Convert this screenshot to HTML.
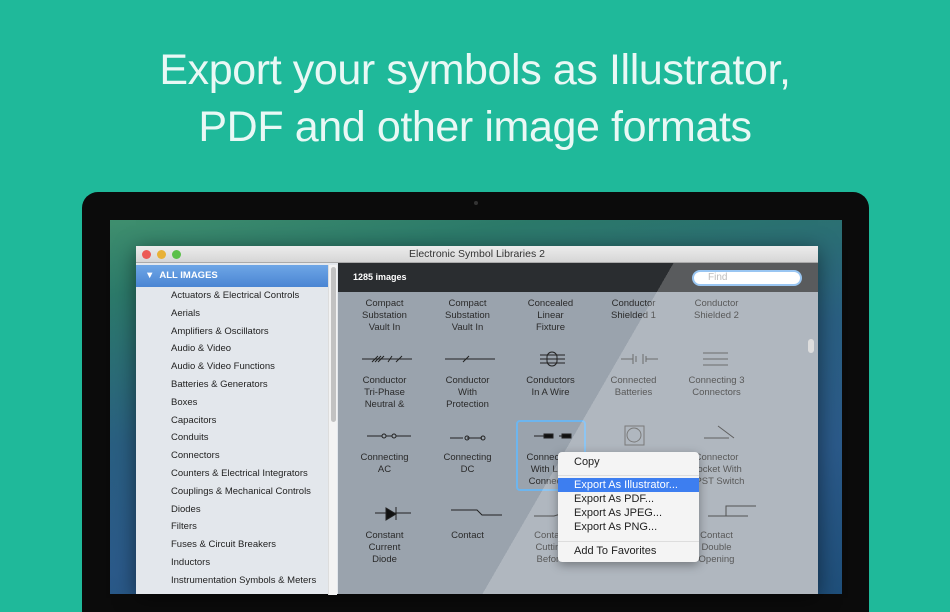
<!DOCTYPE html>
<html><head><meta charset="utf-8"><style>
*{margin:0;padding:0;box-sizing:border-box}
body{width:950px;height:594px;overflow:hidden;background:#1fb99a;font-family:"Liberation Sans",sans-serif;position:relative}
h1{position:absolute;top:42px;left:0;width:950px;text-align:center;color:#fff;font-weight:normal;font-size:43px;line-height:57px;letter-spacing:-0.4px;font-family:"Liberation Sans",sans-serif;opacity:.9}
.bezel{position:absolute;left:82px;top:192px;width:787px;height:420px;background:#0b0b0b;border-radius:16px 16px 0 0}
.cam{position:absolute;left:474px;top:201px;width:4px;height:4px;border-radius:50%;background:#333}
.screen{position:absolute;left:110px;top:220px;width:732px;height:374px;background:linear-gradient(170deg,#3f8f6e 0%,#2c7a6a 15%,#2a5f82 45%,#2b5a8a 70%,#1f4f7a 100%)}
.win{position:absolute;left:136px;top:246px;width:682px;height:348px;background:#e8e8e8;box-shadow:0 4px 20px rgba(0,0,0,.5)}
.title{height:17px;background:linear-gradient(#ececec,#d6d6d6);font-size:10.5px;text-align:center;line-height:17px;color:#333;border-bottom:1px solid #aaa;position:relative}
.dot{position:absolute;top:4px;width:9px;height:9px;border-radius:50%}
.side{position:absolute;left:0;top:17px;width:202px;height:331px;background:#e3e7ec}
.sel{height:22px;margin-top:2px;background:linear-gradient(#6ea6e6,#4a85d3);color:#fff;font-size:9.5px;font-weight:bold;line-height:22px;padding-left:9px;width:192px}
.side ul{list-style:none;padding-left:35px;font-size:9.5px;color:#222}
.side li{height:17.8px;line-height:17.8px}
.sb{position:absolute;left:192px;top:2px;width:9px;height:330px;background:#f3f3f3;border-left:1px solid #ddd}
.sb div{position:absolute;left:2px;top:2px;width:5px;height:155px;background:#c2c2c2;border-radius:3px}
.main{position:absolute;left:202px;top:17px;width:480px;height:331px;background:#9aa3ad;overflow:hidden}
.tb{height:29px;background:#2a2d30;color:#fff;font-size:9px;font-weight:bold;line-height:29px;padding-left:15px;position:relative}
.find{position:absolute;left:354px;top:7px;width:110px;height:16px;border-radius:8px;background:#fff;border:2px solid #7db6ee;color:#aaa;font-weight:normal;font-size:10px;line-height:12px;padding-left:14px}
.cell{position:absolute;width:83px;text-align:center;font-size:9.5px;line-height:12px;color:#2a2a2a}
.glare{position:absolute;left:0;top:0;width:480px;height:331px;background:linear-gradient(120deg,transparent 0,transparent 50%,rgba(255,255,255,.22) 50%,rgba(255,255,255,.22) 100%)}
.menu{position:absolute;left:558px;top:452px;width:141px;height:110px;background:#f4f4f4;border-radius:4px;box-shadow:0 3px 10px rgba(0,0,0,.35);font-size:11px;color:#222}
.menu div{height:14px;line-height:14px;padding-left:16px}
.menu .h{background:#3d7ef0;color:#fff}
svg{position:absolute}
</style></head><body>
<h1>Export your symbols as Illustrator,<br>PDF and other image formats</h1>
<div class="bezel"></div><div class="cam"></div>
<div class="screen"></div>
<div class="win">
 <div class="title">Electronic Symbol Libraries 2
  <span class="dot" style="left:6px;background:#ec5a55"></span><span class="dot" style="left:21px;background:#e8b136"></span><span class="dot" style="left:36px;background:#5cc04a"></span></div>
 <div class="side">
  <div class="sel">▼&nbsp; ALL IMAGES</div>
  <ul><li>Actuators &amp; Electrical Controls</li><li>Aerials</li><li>Amplifiers &amp; Oscillators</li><li>Audio &amp; Video</li><li>Audio &amp; Video Functions</li><li>Batteries &amp; Generators</li><li>Boxes</li><li>Capacitors</li><li>Conduits</li><li>Connectors</li><li>Counters &amp; Electrical Integrators</li><li>Couplings &amp; Mechanical Controls</li><li>Diodes</li><li>Filters</li><li>Fuses &amp; Circuit Breakers</li><li>Inductors</li><li>Instrumentation Symbols &amp; Meters</li></ul>
  <div class="sb"><div></div></div>
 </div>
 <div class="main">
  <div class="tb">1285 images<div class="find">Find</div></div>
  <div class="cell" style="left:5px;top:35px">Compact<br>Substation<br>Vault In</div>
  <div class="cell" style="left:88px;top:35px">Compact<br>Substation<br>Vault In</div>
  <div class="cell" style="left:171px;top:35px">Concealed<br>Linear<br>Fixture</div>
  <div class="cell" style="left:254px;top:35px">Conductor<br>Shielded 1</div>
  <div class="cell" style="left:337px;top:35px">Conductor<br>Shielded 2</div>
  <div class="cell" style="left:5px;top:112px">Conductor<br>Tri-Phase<br>Neutral &amp;</div>
  <div class="cell" style="left:88px;top:112px">Conductor<br>With<br>Protection</div>
  <div class="cell" style="left:171px;top:112px">Conductors<br>In A Wire</div>
  <div class="cell" style="left:254px;top:112px">Connected<br>Batteries</div>
  <div class="cell" style="left:337px;top:112px">Connecting 3<br>Connectors</div>
  <div class="cell" style="left:5px;top:189px">Connecting<br>AC</div>
  <div class="cell" style="left:88px;top:189px">Connecting<br>DC</div>
  <div class="cell" style="left:171px;top:189px">Connecting<br>With Line<br>Connector</div>
  <div class="cell" style="left:337px;top:189px">Connector<br>Socket With<br>DPST Switch</div>
  <div class="cell" style="left:5px;top:267px">Constant<br>Current<br>Diode</div>
  <div class="cell" style="left:88px;top:267px">Contact</div>
  <div class="cell" style="left:171px;top:267px">Contact<br>Cutting<br>Before</div>
  <div class="cell" style="left:337px;top:267px">Contact<br>Double<br>Opening</div>
  <div style="position:absolute;left:178px;top:157px;width:70px;height:71px;border:2px solid #6db5ee;border-radius:4px"></div>
  <svg width="480" height="331" style="left:0;top:0" stroke="#222" fill="none" stroke-width="1">
   <path d="M24 96h50M34 99l6-6M37 99l6-6M40 99l6-6M50 99l4-6M58 99l6-6"/>
   <path d="M107 96h50M125 99l6-6"/>
   <path d="M202 92h25M202 96h25M202 100h25"/><rect x="209" y="89" width="10" height="14" rx="5"/>
   <path d="M283 96h12M295 91v10M298 93v6M305 91v10M308 93v6M308 96h12" stroke="#444"/>
   <path d="M365 90h25M365 96h25M365 102h25" stroke="#444"/>
   <path d="M29 173h15M48 173h6M58 173h15"/><circle cx="46" cy="173" r="2"/><circle cx="56" cy="173" r="2"/>
   <path d="M112 175h13M131 175h12M129 175h15"/><circle cx="129" cy="175" r="2"/><circle cx="145" cy="175" r="2"/>
   <path d="M196 173h10M221 173h10" /><rect x="206" y="171" width="9" height="4" fill="#111"/><rect x="224" y="171" width="9" height="4" fill="#111"/>
   <rect x="287" y="163" width="19" height="19" stroke="#555"/><circle cx="296" cy="172" r="7" stroke="#555"/>
   <path d="M366 175h25M380 163l16 12" stroke="#333"/>
   <path d="M37 250h36"/><path d="M48 245v12l10-6z" fill="#111"/><path d="M58 244v13"/>
   <path d="M113 247h26l5 5h20"/>
   <path d="M196 253h20l20-6"/>
   <path d="M370 253h40M388 253v-10h30"/>
  </svg>
  <div class="glare"></div>
  <div style="position:absolute;left:470px;top:76px;width:6px;height:14px;background:#ddd;border-radius:3px"></div>
 </div>
</div>
<div class="menu">
 <div style="margin-top:3px">Copy</div>
 <div style="height:7px;border-bottom:1px solid #ddd;margin-bottom:2px"></div>
 <div class="h">Export As Illustrator...</div>
 <div>Export As PDF...</div><div>Export As JPEG...</div><div>Export As PNG...</div>
 <div style="height:8px;border-bottom:1px solid #ddd"></div>
 <div style="margin-top:2px">Add To Favorites</div>
</div>
</body></html>
